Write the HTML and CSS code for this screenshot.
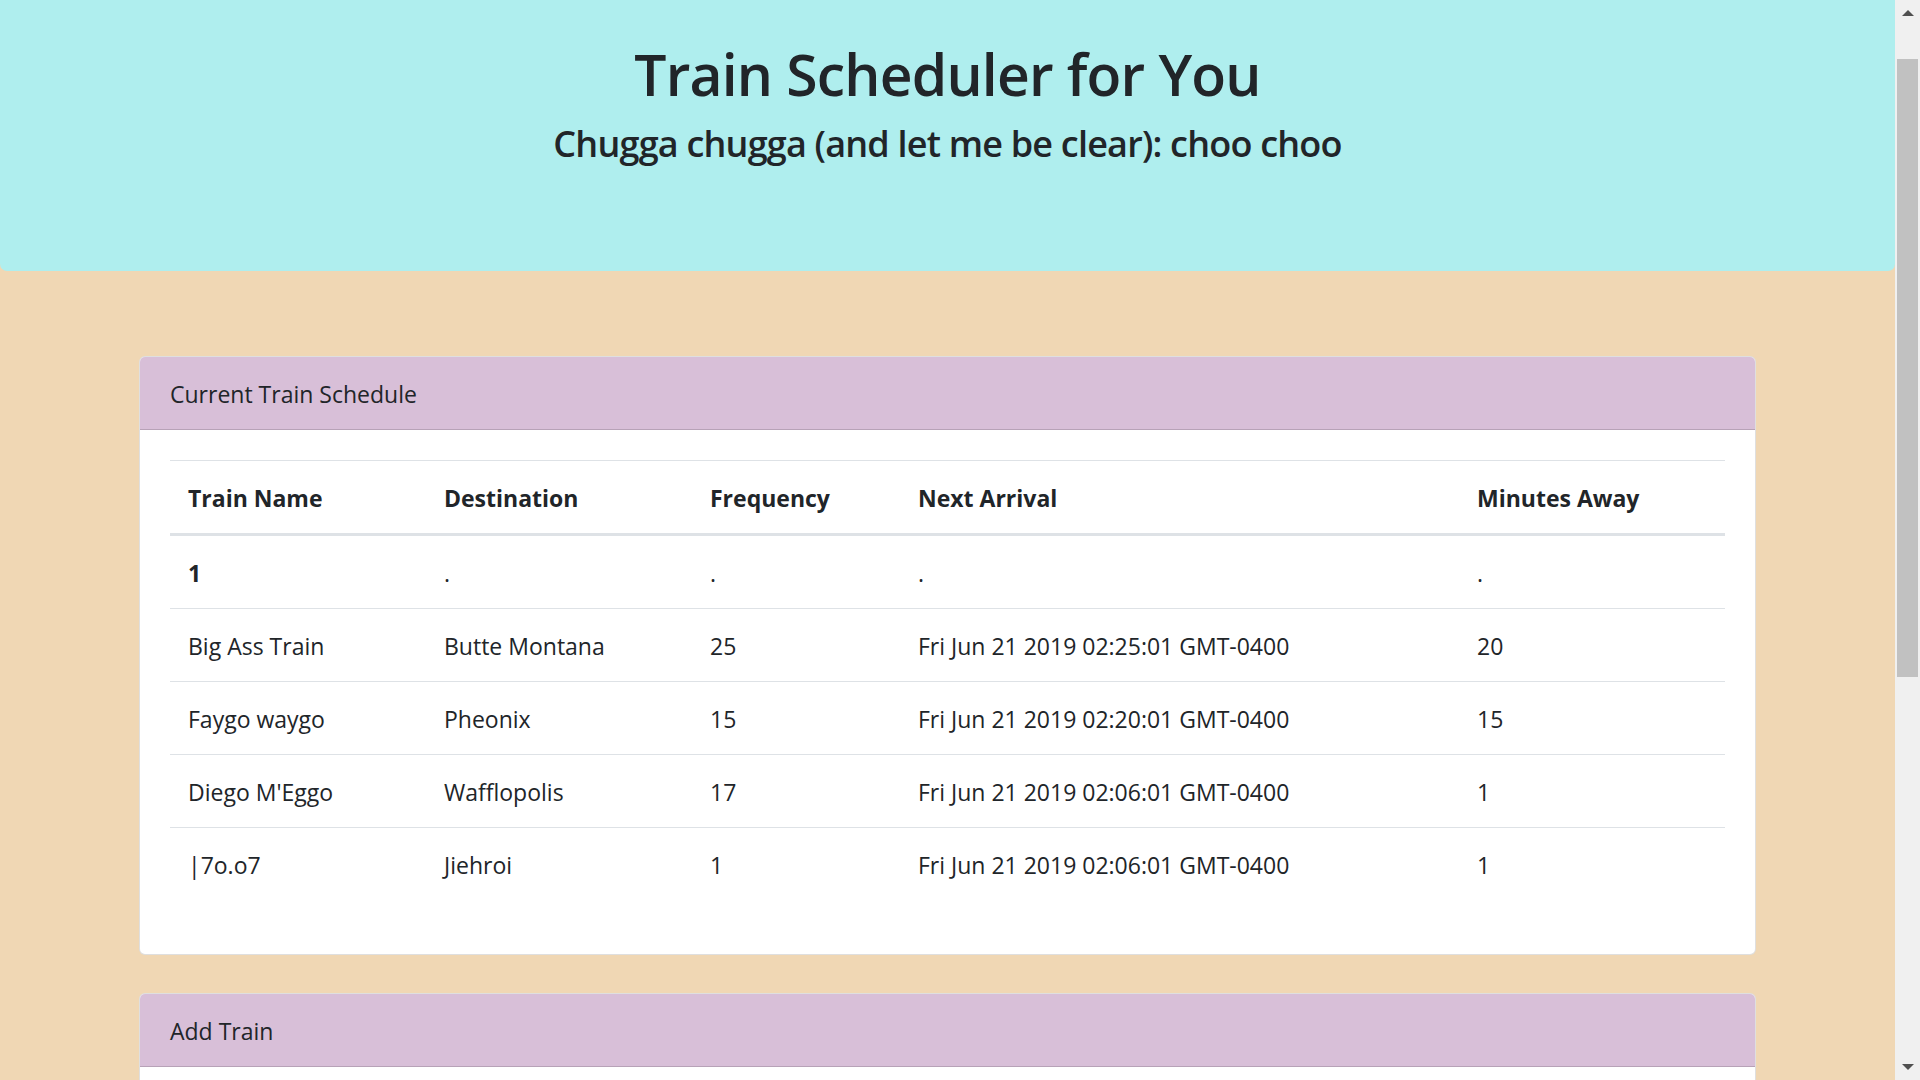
FILE: index.html
```html
<!DOCTYPE html>
<html lang="en">
<head>
<meta charset="utf-8">
<title>Train Scheduler</title>
<link rel="stylesheet" href="styles.css">
</head>
<body>
<div class="window">
  <div class="viewport">
    <header class="jumbotron">
      <h1 class="title">Train Scheduler for You</h1>
      <h4 class="subtitle">Chugga chugga (and let me be clear): choo choo</h4>
    </header>
    <main class="container">
      <section class="card">
        <div class="card-header">Current Train Schedule</div>
        <div class="card-body">
          <table class="table">
            <colgroup>
              <col class="c1"><col class="c2"><col class="c3"><col class="c4"><col class="c5">
            </colgroup>
            <thead>
              <tr><th>Train Name</th><th>Destination</th><th>Frequency</th><th>Next Arrival</th><th>Minutes Away</th></tr>
            </thead>
            <tbody>
              <tr><th>1</th><td>.</td><td>.</td><td>.</td><td>.</td></tr>
              <tr><td>Big Ass Train</td><td>Butte Montana</td><td>25</td><td>Fri Jun 21 2019 02:25:01 GMT-0400</td><td>20</td></tr>
              <tr><td>Faygo waygo</td><td>Pheonix</td><td>15</td><td>Fri Jun 21 2019 02:20:01 GMT-0400</td><td>15</td></tr>
              <tr><td>Diego M'Eggo</td><td>Wafflopolis</td><td>17</td><td>Fri Jun 21 2019 02:06:01 GMT-0400</td><td>1</td></tr>
              <tr><td>|7o.o7</td><td>Jiehroi</td><td>1</td><td>Fri Jun 21 2019 02:06:01 GMT-0400</td><td>1</td></tr>
            </tbody>
          </table>
        </div>
      </section>
      <section class="card">
        <div class="card-header">Add Train</div>
        <div class="card-body card-body-form"></div>
      </section>
    </main>
  </div>
  <div class="scrollbar">
    <div class="arrow up"></div>
    <div class="track"><div class="thumb"></div></div>
    <div class="arrow down"></div>
  </div>
</div>
</body>
</html>
```

FILE: styles.css
```css
html, body {
  margin: 0;
  padding: 0;
  height: 100%;
  overflow: hidden;
}
body {
  background: #f0d7b4;
  color: #212529;
  font-family: "Open Sans", "Noto Sans", sans-serif;
  font-size: 23px;
  line-height: 36px;
}
.window {
  display: flex;
  height: 100vh;
}
.viewport {
  flex: 1;
  overflow: hidden;
  min-width: 0;
}
.jumbotron {
  background: #afeeee;
  border-radius: 0 0 7px 7px;
  text-align: center;
  padding: 40px 30px 0;
  height: 271px;
  box-sizing: border-box;
}
.title {
  font-size: 57px;
  font-weight: 600;
  letter-spacing: -0.8px;
  line-height: 1.2;
  margin: 0 0 14px;
}
.subtitle {
  font-size: 36px;
  font-weight: 600;
  letter-spacing: -0.8px;
  line-height: 1.2;
  margin: 0;
}
.container {
  width: 1617px;
  margin: 0 auto;
  padding-top: 85px;
  display: flex;
  flex-direction: column;
  gap: 38px;
}
.card {
  background: #fff;
  border: 1px solid rgba(0,0,0,.125);
  border-radius: 6px;
  overflow: hidden;
}
.card-header {
  background: #d8bfd8;
  padding: 19px 30px 17px;
  border-bottom: 1px solid rgba(0,0,0,.15);
}
.card-body {
  padding: 30px;
}
.card-body-form {
  height: 640px;
}
.table {
  width: 100%;
  table-layout: fixed;
  border-collapse: collapse;
  margin-bottom: 24px;
}
.c1 { width: 256px; }
.c2 { width: 266px; }
.c3 { width: 208px; }
.c4 { width: 559px; }
.c5 { width: 266px; }
.table th, .table td {
  padding: 19px 18px 17px;
  text-align: left;
  vertical-align: top;
  border-top: 1px solid #dee2e6;
  white-space: nowrap;
}
.table th { font-weight: 700; }
.table thead th {
  border-bottom: 3px solid #dee2e6;
}
.scrollbar {
  width: 25px;
  flex: none;
  background: #f0f0f0;
  display: flex;
  flex-direction: column;
}
.arrow {
  height: 26px;
  flex: none;
  display: flex;
  justify-content: center;
  box-sizing: border-box;
}
.arrow::before {
  content: "";
  width: 0;
  height: 0;
  border-left: 6px solid transparent;
  border-right: 6px solid transparent;
}
.arrow.up { align-items: flex-start; padding-top: 10px; }
.arrow.up::before { border-bottom: 6px solid #505050; }
.arrow.down { align-items: flex-end; padding-bottom: 10px; }
.arrow.down::before { border-top: 6px solid #505050; }
.track {
  flex: 1;
  padding: 33px 2px 0;
}
.thumb {
  height: 618px;
  background: #c1c1c1;
}
```
